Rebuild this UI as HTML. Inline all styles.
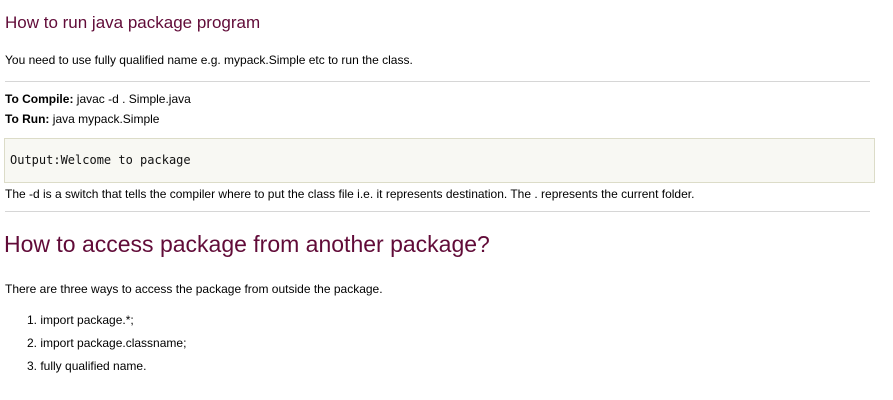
<!DOCTYPE html>
<html><head><style>
body{margin:0;width:893px;height:400px;background:#fff;font-family:"Liberation Sans",sans-serif;color:#000;position:relative;overflow:hidden}
.a{position:absolute;white-space:nowrap;font-size:12px;line-height:14px}
h3,h2{margin:0;font-weight:normal;color:#610b38;position:absolute;white-space:nowrap}
.hr{position:absolute;left:5px;width:865px;height:1px;background:#d6d6d6}
.pre{position:absolute;left:4px;top:138px;width:871px;height:45px;background:#f8f8f3;border:1px solid #dcdcc8;box-sizing:border-box}
.pre span{position:absolute;left:5px;top:14px;font-family:"DejaVu Sans Mono","Liberation Mono",monospace;font-size:12px;color:#111}
</style></head><body>
<h3 style="left:5px;top:12px;font-size:17px;line-height:22px">How to run java package program</h3>
<div class="a" style="left:5px;top:53px">You need to use fully qualified name e.g. mypack.Simple etc to run the class.</div>
<div class="hr" style="top:81px"></div>
<div class="a" style="left:5px;top:92px"><b>To Compile:</b> javac -d . Simple.java</div>
<div class="a" style="left:5px;top:112px"><b>To Run:</b> java mypack.Simple</div>
<div class="pre"><span>Output:Welcome to package</span></div>
<div class="a" style="left:5px;top:187px">The -d is a switch that tells the compiler where to put the class file i.e. it represents destination. The . represents the current folder.</div>
<div class="hr" style="top:211px"></div>
<h2 style="left:4px;top:229px;font-size:23px;line-height:30px">How to access package from another package?</h2>
<div class="a" style="left:5px;top:282px">There are three ways to access the package from outside the package.</div>
<div class="a" style="left:27px;top:313px">1. import package.*;</div>
<div class="a" style="left:27px;top:336px">2. import package.classname;</div>
<div class="a" style="left:27px;top:359px">3. fully qualified name.</div>
</body></html>
